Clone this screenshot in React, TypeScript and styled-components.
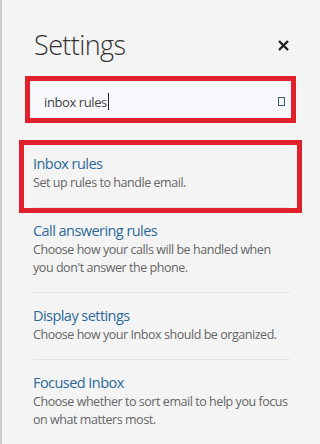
import styled, { createGlobalStyle } from "styled-components";

const GlobalStyle = createGlobalStyle`
  html, body {
    margin: 0;
    padding: 0;
    background: #f4f4f4;
  }
  * {
    box-sizing: border-box;
  }
`;

const Panel = styled.div`
  width: 320px;
  height: 444px;
  border-left: 2px solid #cdcdcd;
  background: #f4f4f4;
  font-family: "Open Sans", "Noto Sans", sans-serif;
  overflow: hidden;
`;

const Header = styled.div`
  display: flex;
  align-items: flex-start;
  justify-content: space-between;
  padding: 26px 30px 0 32px;
  height: 76px;
`;

const Title = styled.h1`
  margin: 0;
  font-size: 27px;
  font-weight: 300;
  letter-spacing: -0.6px;
  color: #333;
  line-height: 38px;
`;

const CloseButton = styled.button`
  border: none;
  background: none;
  padding: 0;
  margin-top: 12px;
  width: 14px;
  height: 14px;
  display: flex;
  align-items: center;
  justify-content: center;
  cursor: pointer;
`;

const SearchFrame = styled.div`
  margin: 0 24px 0 23px;
  border: 5px solid #e0202a;
  height: 47px;
`;

const SearchInner = styled.div`
  height: 100%;
  background: #f6f8fb;
  display: flex;
  align-items: center;
  padding: 4px 6px 0 14px;
`;

const SearchText = styled.span`
  flex: 1;
  font-size: 13px;
  letter-spacing: -0.4px;
  color: #444;
  display: flex;
  align-items: center;
`;

const Caret = styled.span`
  display: inline-block;
  width: 1px;
  height: 17px;
  background: #222;
  margin-left: 1px;
`;

const List = styled.div`
  padding: 18px 30px 0 31px;
`;

const Item = styled.div<{ $highlight?: boolean }>`
  position: relative;
  padding: 13px 0 15px;
  border-bottom: 1px solid #e4e4e4;
  ${(p) =>
    p.$highlight &&
    `
    &::after {
      content: "";
      position: absolute;
      top: -1px;
      left: -14px;
      right: -12px;
      bottom: -6px;
      border: 5px solid #e0202a;
      pointer-events: none;
    }
  `}
`;

const ItemTitle = styled.div`
  font-size: 14.5px;
  letter-spacing: -0.55px;
  line-height: 20px;
  color: #2c6a99;
`;

const ItemDesc = styled.div`
  font-size: 12.5px;
  letter-spacing: -0.45px;
  line-height: 18px;
  color: #666;
`;

const items = [
  { title: "Inbox rules", desc: "Set up rules to handle email.", highlight: true },
  {
    title: "Call answering rules",
    desc: "Choose how your calls will be handled when you don't answer the phone.",
  },
  { title: "Display settings", desc: "Choose how your Inbox should be organized." },
  {
    title: "Focused Inbox",
    desc: "Choose whether to sort email to help you focus on what matters most.",
  },
];

export default function App() {
  return (
    <>
      <GlobalStyle />
      <Panel>
        <Header>
          <Title>Settings</Title>
          <CloseButton aria-label="Close">
            <svg width="11" height="11" viewBox="0 0 11 11">
              <path d="M1 1L10 10M10 1L1 10" stroke="#222" strokeWidth="2.4" />
            </svg>
          </CloseButton>
        </Header>
        <SearchFrame>
          <SearchInner>
            <SearchText>
              inbox rules
              <Caret />
            </SearchText>
            <svg width="7" height="9" viewBox="0 0 7 9">
              <rect x="0.5" y="0.5" width="6" height="8" fill="none" stroke="#3b5a72" strokeWidth="1" />
            </svg>
          </SearchInner>
        </SearchFrame>
        <List>
          {items.map((it) => (
            <Item key={it.title} $highlight={it.highlight}>
              <ItemTitle>{it.title}</ItemTitle>
              <ItemDesc>{it.desc}</ItemDesc>
            </Item>
          ))}
        </List>
      </Panel>
    </>
  );
}
